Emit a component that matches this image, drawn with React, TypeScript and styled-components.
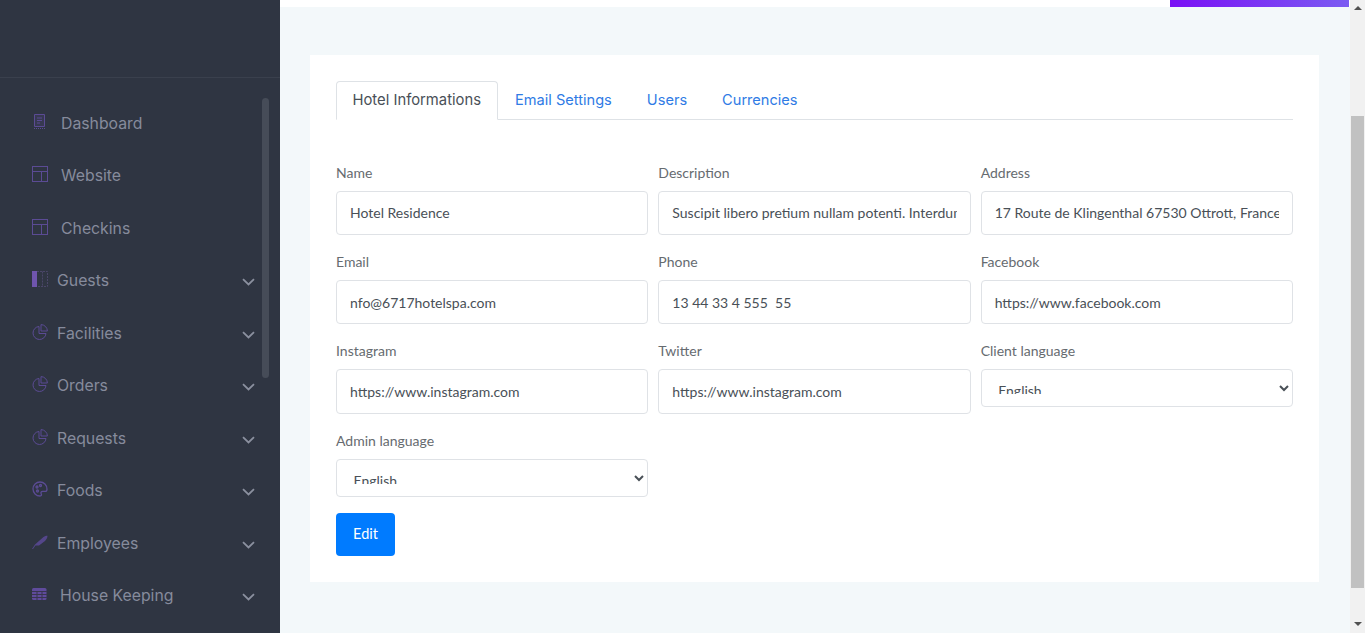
import React from "react";
import styled, { createGlobalStyle } from "styled-components";

const GlobalStyle = createGlobalStyle`
  html, body {
    margin: 0;
    padding: 0;
    height: 100%;
    overflow: hidden;
    background: #f3f7fa;
  }
  * { box-sizing: border-box; }
`;

const ICON = "#5b4b94";

const ReceiptIcon = () => (
  <svg width="15" height="16" viewBox="0 0 15 16" fill="none" stroke={ICON} strokeWidth="1">
    <path d="M2.500 .5h10v12h-10z" fill="#5b4b9430" />
    <path d="M5 4h5M5 6.500h5M5 9h3" />
    <path d="M2 14.500h11" strokeDasharray="1 1" />
  </svg>
);

const LayoutIcon = () => (
  <svg width="16" height="16" viewBox="0 0 16 16" fill="none" stroke={ICON} strokeWidth="1">
    <rect x=".5" y=".5" width="15" height="15" />
    <path d="M.5 5.500h15M9.500 5.500v10" />
  </svg>
);

const SidebarIcon = () => (
  <svg width="16" height="16" viewBox="0 0 16 16" fill="none">
    <rect x="0" y="0" width="5" height="16" fill="#6f55ad" />
    <path d="M5 .5h10.500v15H5M10.500 .5v15" stroke="#4a4668" strokeWidth="1" strokeDasharray="2 1" />
  </svg>
);

const PieIcon = () => (
  <svg width="16" height="16" viewBox="0 0 16 16" fill="none" stroke={ICON} strokeWidth="1">
    <path d="M7 2.500a6.500 6.500 0 1 0 7 7H7z" />
    <path d="M9 .6a6.500 6.500 0 0 1 6.400 6.400H9z" />
  </svg>
);

const PaletteIcon = () => (
  <svg width="16" height="16" viewBox="0 0 16 16" fill="none" stroke={ICON} strokeWidth="1.300">
    <path d="M8 1a7 7 0 1 0 0 14c1.600 0 1.800-1.200 1.200-2.200-.7-1.200 0-2.400 1.400-2.400H13c1.300 0 2-.9 2-2.200C15 3.900 11.900 1 8 1z" />
    <circle cx="5" cy="6" r="1" />
    <circle cx="8.500" cy="4.500" r="1" />
    <circle cx="5.500" cy="10" r="1" />
  </svg>
);

const FeatherIcon = () => (
  <svg width="16" height="16" viewBox="0 0 16 16">
    <path d="M0 15 3 10.500 11.500 3C13 1.800 14.800 1.500 15.500 1.700 15.500 3.500 14.500 5.500 13 7L7 11.500 3.500 11.500 1 15z" fill="#54468a" />
  </svg>
);

const TableIcon = () => (
  <svg width="15" height="14" viewBox="0 0 15 14" fill="none">
    <rect x="0" y="1" width="14.500" height="12" rx="1.500" fill="#5f4b9c" />
    <path d="M0 4.500h15M0 7.500h15M0 10.500h15M5 4.500v8.500M10 4.500v8.500" stroke="#39364f" strokeWidth="1" />
  </svg>
);

const Chevron = () => (
  <svg width="13" height="8" viewBox="0 0 13 8" fill="none" stroke="#8b909f" strokeWidth="1.800">
    <path d="M1 1.200l5.500 5.300L12 1.200" />
  </svg>
);

type NavEntry = {
  label: string;
  icon: React.ReactNode;
  labelLeft: number;
  hasChevron?: boolean;
};

const navEntries: NavEntry[] = [
  { label: "Dashboard", icon: <ReceiptIcon />, labelLeft: 61 },
  { label: "Website", icon: <LayoutIcon />, labelLeft: 61 },
  { label: "Checkins", icon: <LayoutIcon />, labelLeft: 61 },
  { label: "Guests", icon: <SidebarIcon />, labelLeft: 57, hasChevron: true },
  { label: "Facilities", icon: <PieIcon />, labelLeft: 57, hasChevron: true },
  { label: "Orders", icon: <PieIcon />, labelLeft: 57, hasChevron: true },
  { label: "Requests", icon: <PieIcon />, labelLeft: 57, hasChevron: true },
  { label: "Foods", icon: <PaletteIcon />, labelLeft: 57, hasChevron: true },
  { label: "Employees", icon: <FeatherIcon />, labelLeft: 57, hasChevron: true },
  { label: "House Keeping", icon: <TableIcon />, labelLeft: 60, hasChevron: true },
];

type FieldEntry = { label: string; value: string; select?: boolean };

const fields: FieldEntry[] = [
  { label: "Name", value: "Hotel Residence" },
  { label: "Description", value: "Suscipit libero pretium nullam potenti. Interdum, blandit" },
  { label: "Address", value: "17 Route de Klingenthal 67530 Ottrott, France" },
  { label: "Email", value: "nfo@6717hotelspa.com" },
  { label: "Phone", value: "13 44 33 4 555  55" },
  { label: "Facebook", value: "https://www.facebook.com" },
  { label: "Instagram", value: "https://www.instagram.com" },
  { label: "Twitter", value: "https://www.instagram.com" },
  { label: "Client language", value: "English", select: true },
  { label: "Admin language", value: "English", select: true },
];

const tabs = ["Hotel Informations", "Email Settings", "Users", "Currencies"];

export default function App() {
  return (
    <Page>
      <GlobalStyle />
      <Sidebar>
        <Brand />
        <Nav>
          {navEntries.map((entry) => (
            <NavRow key={entry.label}>
              <NavIcon>{entry.icon}</NavIcon>
              <NavLabel $left={entry.labelLeft}>{entry.label}</NavLabel>
              {entry.hasChevron && (
                <ChevronSlot>
                  <Chevron />
                </ChevronSlot>
              )}
            </NavRow>
          ))}
        </Nav>
        <SidebarThumb />
      </Sidebar>
      <Main>
        <TopStrip>
          <PurpleButton />
        </TopStrip>
        <Card>
          <TabBar>
            {tabs.map((tab, i) => (
              <Tab key={tab} $active={i === 0}>
                {tab}
              </Tab>
            ))}
          </TabBar>
          <FormGrid>
            {fields.map((field) => (
              <Field key={field.label}>
                <FieldLabel>{field.label}</FieldLabel>
                {field.select ? (
                  <Select defaultValue={field.value}>
                    <option>{field.value}</option>
                  </Select>
                ) : (
                  <Input readOnly value={field.value} />
                )}
              </Field>
            ))}
          </FormGrid>
          <EditButton>Edit</EditButton>
        </Card>
      </Main>
      <PageScrollbar>
        <ArrowUp />
        <PageThumb />
        <ArrowDown />
      </PageScrollbar>
    </Page>
  );
}

const Page = styled.div`
  display: flex;
  width: 1365px;
  height: 633px;
  overflow: hidden;
  background: #f3f8fa;
`;

const Sidebar = styled.aside`
  position: relative;
  flex: 0 0 280px;
  height: 633px;
  overflow: hidden;
  background: #2f3542;
`;

const Brand = styled.div`
  height: 78px;
  border-bottom: 1px solid #3a404d;
`;

const Nav = styled.nav`
  display: flex;
  flex-direction: column;
  padding-top: 19px;
`;

const NavRow = styled.div`
  position: relative;
  display: flex;
  align-items: center;
  height: 52.5px;
  flex: none;
  padding: 0 25px 0 32px;
`;

const NavIcon = styled.span`
  display: flex;
  width: 16px;
  margin-top: -3px;
`;

const NavLabel = styled.span<{ $left: number }>`
  margin-left: ${(p) => p.$left - 48}px;
  font-family: Inter, "Noto Sans", sans-serif;
  font-size: 15.8px;
  color: #868b9c;
`;

const ChevronSlot = styled.span`
  display: flex;
  margin-left: auto;
  padding-top: 3px;
`;

const SidebarThumb = styled.div`
  position: absolute;
  left: 262px;
  top: 98px;
  width: 7px;
  height: 280px;
  border-radius: 4px;
  background: #464c58;
`;

const Main = styled.main`
  flex: 1;
  display: flex;
  flex-direction: column;
  min-width: 0;
`;

const TopStrip = styled.div`
  display: flex;
  justify-content: flex-end;
  height: 7px;
  padding-right: 1px;
  background: #fff;
`;

const PurpleButton = styled.div`
  width: 179px;
  background: linear-gradient(90deg, #7a0ff5, #7b5cf2);
`;

const Card = styled.section`
  display: flex;
  flex-direction: column;
  align-items: flex-start;
  height: 527px;
  margin: 48px 31px 0 30px;
  padding: 26px;
  background: #fff;
`;

const TabBar = styled.div`
  display: flex;
  align-self: stretch;
  height: 39px;
  border-bottom: 1px solid #dee2e6;
`;

const Tab = styled.div<{ $active: boolean }>`
  height: 39px;
  padding: 0 ${(p) => (p.$active ? "15.5px" : "16.5px")};
  line-height: 37px;
  font-family: Inter, "Noto Sans", sans-serif;
  font-size: ${(p) => (p.$active ? "14.8px" : "14.6px")};
  color: ${(p) => (p.$active ? "#495057" : "#2f7be5")};
  background: ${(p) => (p.$active ? "#fff" : "transparent")};
  border: 1px solid ${(p) => (p.$active ? "#dee2e6" : "transparent")};
  border-bottom-color: ${(p) => (p.$active ? "#fff" : "transparent")};
  border-radius: 4px 4px 0 0;
`;

const FormGrid = styled.div`
  display: grid;
  align-self: stretch;
  grid-template-columns: repeat(3, 1fr);
  column-gap: 10px;
  row-gap: 18px;
  margin-top: 44px;
`;

const Field = styled.div`
  display: flex;
  flex-direction: column;
  min-width: 0;
`;

const FieldLabel = styled.label`
  height: 18px;
  margin-bottom: 9px;
  font-family: Lato, "Liberation Sans", sans-serif;
  font-size: 14px;
  line-height: 18px;
  color: #666b70;
`;

const Input = styled.input`
  width: 100%;
  height: 44.2px;
  padding: 0 13px 0.5px;
  font-family: Lato, "Liberation Sans", sans-serif;
  font-size: 14px;
  color: #495057;
  background: #fff;
  border: 1px solid #dfe2e6;
  border-radius: 4px;
  outline: none;
`;

const Select = styled.select`
  width: 100%;
  height: 38px;
  padding: 11px 12.5px 12px;
  font-family: Lato, "Liberation Sans", sans-serif;
  font-size: 14px;
  color: #495057;
  background: #fff;
  border: 1px solid #dfe2e6;
  border-radius: 4px;
  outline: none;
`;

const EditButton = styled.button`
  width: 59px;
  height: 43px;
  margin-top: 16px;
  padding: 0 0 2px;
  font-family: Lato, "Liberation Sans", sans-serif;
  font-size: 14.5px;
  color: #fff;
  background: #007bff;
  border: none;
  border-radius: 4px;
`;

const PageScrollbar = styled.div`
  flex: 0 0 15px;
  display: flex;
  flex-direction: column;
  align-items: center;
  height: 633px;
  background: #f1f1f1;
`;

const ArrowUp = styled.div`
  flex: none;
  width: 0;
  height: 0;
  margin-top: 6px;
  border-left: 4px solid transparent;
  border-right: 4px solid transparent;
  border-bottom: 4px solid #505050;
`;

const PageThumb = styled.div`
  flex: none;
  width: 13px;
  height: 472px;
  margin-top: 106px;
  background: #c1c1c1;
`;

const ArrowDown = styled.div`
  flex: none;
  width: 0;
  height: 0;
  margin-top: 34px;
  border-left: 4px solid transparent;
  border-right: 4px solid transparent;
  border-top: 4px solid #505050;
`;
